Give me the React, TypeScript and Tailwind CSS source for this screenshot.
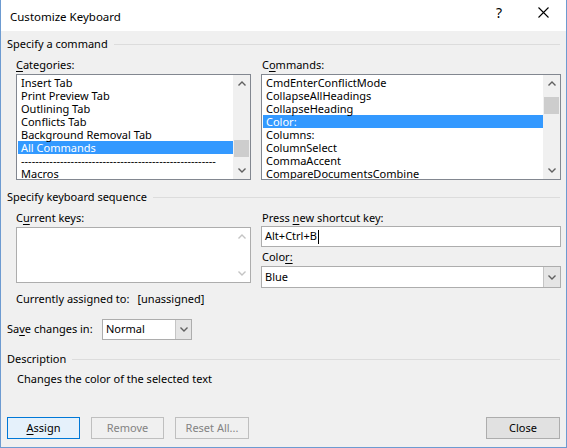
import React from "react";

const font = { fontFamily: '"Noto Sans", "Liberation Sans", sans-serif' };

function Chevron({ up, disabled }: { up?: boolean; disabled?: boolean }) {
  return (
    <svg width="8" height="5" viewBox="0 0 8 5" className="block">
      <path
        d={up ? "M0.5 4.5 L4 1 L7.5 4.5" : "M0.5 0.5 L4 4 L7.5 0.5"}
        fill="none"
        stroke={disabled ? "#c4c4c4" : "#606060"}
        strokeWidth="1.4"
      />
    </svg>
  );
}

function ScrollBar({ thumbTop, disabled }: { thumbTop?: number; disabled?: boolean }) {
  return (
    <div className="flex w-[17px] shrink-0 flex-col bg-[#f0f0f0]">
      <div className="flex h-[17px] items-center justify-center">
        <Chevron up disabled={disabled} />
      </div>
      <div className="flex-1">
        {thumbTop !== undefined && (
          <div className="mx-[1px] h-[17px] bg-[#cdcdcd]" style={{ marginTop: thumbTop }} />
        )}
      </div>
      <div className="flex h-[17px] items-center justify-center">
        <Chevron disabled={disabled} />
      </div>
    </div>
  );
}

function ListBox({ items, selected, thumbTop, textPad }: { items: string[]; selected: number; thumbTop: number; textPad: string }) {
  return (
    <div className="flex h-[106px] border border-[#828790] bg-white">
      <div className="flex-1 overflow-hidden p-[1px] pr-0">
        {items.map((it, i) => (
          <div
            key={i}
            className={
              "h-[13px] whitespace-nowrap text-[11px] leading-[13px] " +
              textPad +
              (i === selected ? " bg-[#3399ff] text-white" : " text-black")
            }
          >
            {it}
          </div>
        ))}
      </div>
      <ScrollBar thumbTop={thumbTop} />
    </div>
  );
}

function SectionHeader({ title }: { title: string }) {
  return (
    <div className="flex h-[14px] items-center pl-[6px] pr-[6px]">
      <span className="text-[11px] leading-[14px] text-black">{title}</span>
      <div className="ml-[6px] h-px flex-1 bg-[#dcdcdc]" />
    </div>
  );
}

function Combo({ value, height, btnW }: { value: string; height: string; btnW: string }) {
  return (
    <div className={"flex border border-[#adadad] bg-white " + height}>
      <div className="flex flex-1 items-center pl-[3px] text-[11px] text-black">{value}</div>
      <div className={"flex items-center justify-center border-l border-[#c5c5c5] bg-[#e5e5e5] " + btnW}>
        <Chevron />
      </div>
    </div>
  );
}

export default function App() {
  const categories = [
    "Insert Tab",
    "Print Preview Tab",
    "Outlining Tab",
    "Conflicts Tab",
    "Background Removal Tab",
    "All Commands",
    "-------------------------------------------------------",
    "Macros",
  ];
  const commands = [
    "CmdEnterConflictMode",
    "CollapseAllHeadings",
    "CollapseHeading",
    "Color:",
    "Columns:",
    "ColumnSelect",
    "CommaAccent",
    "CompareDocumentsCombine",
  ];

  return (
    <div className="h-[448px] w-[567px] overflow-hidden" style={font}>
      <div className="flex h-[448px] w-[567px] flex-col border-x border-b border-[#6d9bd1] bg-[#f0f0f0]">
        {/* Title bar */}
        <div className="flex h-[31px] shrink-0 items-center bg-white">
          <span className="pl-[9px] pt-[3px] text-[11.5px] text-black">Customize Keyboard</span>
          <div className="flex-1" />
          <span className="mb-[6px] mr-[36px] text-[14px] text-black">?</span>
          <svg width="11" height="11" viewBox="0 0 11 11" className="mb-[7px] mr-[17px]">
            <path d="M0.5 0.5 L10.5 10.5 M10.5 0.5 L0.5 10.5" stroke="#000" strokeWidth="1.1" />
          </svg>
        </div>

        {/* Body */}
        <div className="flex flex-1 flex-col">
          <div className="mt-[6px]">
            <SectionHeader title="Specify a command" />
          </div>

          <div className="mt-[6px] flex pl-[15px] pr-[5px]">
            <div className="w-[235px]">
              <div className="h-[15px] text-[11px] leading-[15px] text-black">
                <span className="underline underline-offset-2">C</span>ategories:
              </div>
              <div className="mt-[2px]">
                <ListBox items={categories} selected={5} thumbTop={48} textPad="pl-[3px]" />
              </div>
            </div>
            <div className="ml-[10px] flex-1">
              <div className="h-[15px] pl-[1px] text-[11px] leading-[15px] text-black">
                C<span className="underline underline-offset-2">o</span>mmands:
              </div>
              <div className="mt-[2px]">
                <ListBox items={commands} selected={3} thumbTop={5} textPad="pl-[3px]" />
              </div>
            </div>
          </div>

          <div className="mt-[10px]">
            <SectionHeader title="Specify keyboard sequence" />
          </div>

          <div className="mt-[6px] flex pl-[15px] pr-[5px]">
            <div className="w-[235px]">
              <div className="h-[15px] text-[11px] leading-[15px] text-black">
                C<span className="underline underline-offset-2">u</span>rrent keys:
              </div>
              <div className="mt-[2px] flex h-[56px] border border-[#adadad] bg-white">
                <div className="flex-1" />
                <div className="flex w-[17px] flex-col bg-white">
                  <div className="flex h-[17px] items-center justify-center">
                    <Chevron up disabled />
                  </div>
                  <div className="flex-1" />
                  <div className="flex h-[17px] items-center justify-center">
                    <Chevron disabled />
                  </div>
                </div>
              </div>
              <div className="mt-[8px] flex h-[15px] text-[11px] leading-[15px] text-black">
                <span>Currently assigned to:</span>
                <span className="ml-[8px]">[unassigned]</span>
              </div>
            </div>
            <div className="ml-[10px] flex-1">
              <div className="h-[15px] pl-[1px] text-[11px] leading-[15px] text-black">
                Press <span className="underline underline-offset-2">n</span>ew shortcut key:
              </div>
              <div className="mt-[1px] flex h-[21px] items-center border border-[#adadad] bg-white pl-[3px] text-[11px] text-black">
                <span>Alt+Ctrl+B</span>
                <span className="ml-[1px] inline-block h-[14px] w-px bg-black" />
              </div>
              <div className="mt-[2px] h-[15px] pl-[1px] text-[11px] leading-[15px] text-black">
                Colo<span className="underline underline-offset-2">r:</span>
              </div>
              <div className="mt-[2px]">
                <Combo value="Blue" height="h-[22px]" btnW="w-[17px]" />
              </div>
            </div>
          </div>

          <div className="mt-[13px] flex h-[21px] items-center pl-[6px]">
            <span className="w-[95px] text-[11px] text-black">
              Sa<span className="underline underline-offset-2">v</span>e changes in:
            </span>
            <div className="w-[90px]">
              <Combo value="Normal" height="h-[21px]" btnW="w-[16px]" />
            </div>
          </div>

          <div className="mt-[12px]">
            <SectionHeader title="Description" />
          </div>
          <div className="mt-[6px] pl-[16px] text-[11px] leading-[14px] text-black">
            Changes the color of the selected text
          </div>

          <div className="mt-[31px] flex pl-[6px] pr-[6px]">
            <button className="flex h-[22px] w-[73px] items-center justify-center border border-[#0078d7] bg-[#e5f1fb] text-[11px] text-black">
              <span className="underline underline-offset-2">A</span>ssign
            </button>
            <button className="ml-[11px] flex h-[22px] w-[73px] items-center justify-center border border-[#bfbfbf] bg-[#f0f0f0] text-[11px] text-[#838383]">
              Remove
            </button>
            <button className="ml-[11px] flex h-[22px] w-[74px] items-center justify-center border border-[#bfbfbf] bg-[#f0f0f0] text-[11px] text-[#838383]">
              Reset All...
            </button>
            <div className="flex-1" />
            <button className="flex h-[22px] w-[74px] items-center justify-center border border-[#adadad] bg-[#e1e1e1] text-[11px] text-black">
              Close
            </button>
          </div>
        </div>
      </div>
    </div>
  );
}
